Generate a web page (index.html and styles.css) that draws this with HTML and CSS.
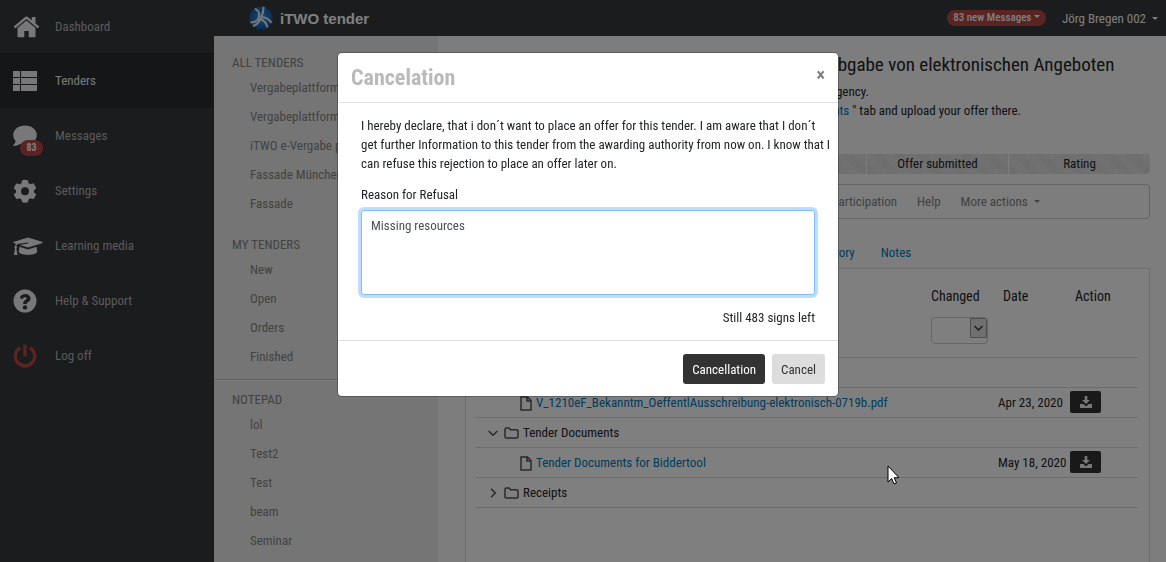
FILE: index.html
```html
<!DOCTYPE html>
<html lang="en">
<head>
  <meta charset="UTF-8" />
  <meta name="viewport" content="width=device-width, initial-scale=1" />
  <title>iTWO tender</title>
  <link rel="stylesheet" href="styles.css">
</head>
<body>
  <div class="app">
    <nav class="sidebar">
      <a href="#" class="side-item">
        <svg class="side-icon" viewBox="0 0 27 24"><path d="M13.5 5.5 4.500 13v8.500c0 .5.300.8.800.8h6v-6.300h4.400v6.300h6c.5 0 .8-.3.800-.8V13z"/><path d="M26.300 11.600 22.500 8.400V2h-3.700v3.300l-3.700-3.100c-1-.8-2.200-.8-3.200 0L.700 11.600l1.500 1.800L13.500 4l11.300 9.400z"/></svg>
        <span>Dashboard</span>
      </a>
      <a href="#" class="side-item active">
        <svg class="side-icon" viewBox="0 0 27 24"><path d="M0 2h7v6H0zM8 2h16v6H8zM0 9h7v6H0zM8 9h16v6H8zM0 16h7v6H0zM8 16h16v6H8z"/></svg>
        <span>Tenders</span>
      </a>
      <a href="#" class="side-item">
        <svg class="side-icon" viewBox="0 0 27 24"><path d="M12 1.500C5.400 1.500.2 5.700.2 11c0 2.300 1 4.300 2.500 6C2.300 19 .5 21 .3 21.300c-.3.3 0 .8.300.8 3 0 5.300-1.300 6.700-2.300 1.400.5 3 .8 4.700.8 6.500 0 11.800-4.200 11.800-9.600S18.500 1.500 12 1.500z"/></svg>
        <span class="count">83</span>
        <span>Messages</span>
      </a>
      <a href="#" class="side-item">
        <svg class="side-icon" viewBox="0 0 27 24"><path fill-rule="evenodd" d="M9 1.300c1.800-.7 4.200-.7 6 0l.500 2.900 2 1.100 2.700-1c1.400 1.400 2.400 3.100 3 5L21 11.200v2.200l2.200 1.900c-.6 1.900-1.600 3.600-3 5l-2.700-1-2 1.100-.5 2.900c-1.900.5-4.100.5-6 0l-.5-2.900-2-1.100-2.700 1c-1.400-1.400-2.400-3.100-3-5L3 13.400v-2.200L.8 9.300c.6-1.900 1.600-3.600 3-5l2.700 1 2-1.100zM12 8.300a4 4 0 1 0 0 8 4 4 0 0 0 0-8z"/></svg>
        <span>Settings</span>
      </a>
      <a href="#" class="side-item">
        <svg class="side-icon wide" viewBox="0 0 30 24"><path d="m15 3.500 14 4.200c.8.300.8 1.300 0 1.600l-14 4.200-8.200-2.400 8.200-1.600c.7-.2.500-1.200-.2-1.100L4.600 10.100c-.8.500-1.200 1.200-1.300 2.100.9.500.9 1.700.1 2.300l1 5.700c.1.400-.1.700-.5.700H1.500c-.4 0-.6-.3-.5-.7l1-5.700c-.8-.6-.8-1.800.1-2.300.1-1 .4-1.800.9-2.500L1 9.300c-.8-.3-.8-1.300 0-1.600zM15 15.400l8.500-2.600.7 4.800c0 2-4.200 3.300-9.200 3.300s-9.200-1.300-9.200-3.300l.7-4.800z"/></svg>
        <span>Learning media</span>
      </a>
      <a href="#" class="side-item">
        <svg class="side-icon" viewBox="0 0 27 24"><path fill-rule="evenodd" d="M12 .5a11.500 11.500 0 1 0 0 23 11.500 11.500 0 0 0 0-23zM6.700 8.600C8 6.300 9.600 5 12.300 5c2.800 0 5.200 1.900 5.200 4.500 0 3.400-3.700 3.500-3.700 4.900v.5h-3.600v-.7c0-2.800 3.500-3.200 3.500-4.600 0-.7-.8-1.300-1.600-1.300-1.200 0-1.800.6-2.900 2zM12 16.200a2.200 2.200 0 1 1 0 4.400 2.200 2.200 0 0 1 0-4.400z"/></svg>
        <span>Help &amp; Support</span>
      </a>
      <a href="#" class="side-item">
        <svg class="side-icon" viewBox="0 0 27 24"><path class="power" d="M7.300 3.800a9.700 9.700 0 1 0 9.400 0M12 .5v12"/></svg>
        <span>Log off</span>
      </a>
    </nav>

    <div class="page">
      <header class="topbar">
        <svg class="logo" viewBox="0 0 24 24">
          <defs>
            <radialGradient id="globe" cx="50%" cy="45%" r="60%">
              <stop offset="0" stop-color="#2f95e6"/>
              <stop offset="1" stop-color="#134f9c"/>
            </radialGradient>
          </defs>
          <circle cx="12" cy="12" r="11.500" fill="url(#globe)"/>
          <path class="swirl" d="M6 2.500c4 2.500 5 6 3.500 9.500-1.200 3-4 4.500-8 4.500M14.500.800c.3 5-1 8-2.500 11.200-1.500 3.500-4 6.500-8 8M13 11c4 .5 7.500 2.500 9.500 6M11.500 13c3.500 1.500 6 4.500 7 8.500"/>
        </svg>
        <span class="brand">iTWO tender</span>
        <button type="button" class="messages">83 new Messages <i class="caret"></i></button>
        <button type="button" class="user">Jörg Bregen 002 <i class="caret"></i></button>
      </header>

      <div class="content">
        <aside class="filters">
          <h2>All tenders</h2>
          <ul>
            <li><a href="#">Vergabeplattform</a></li>
            <li><a href="#">Vergabeplattform</a></li>
            <li><a href="#">iTWO e-Vergabe public</a></li>
            <li><a href="#">Fassade München</a></li>
            <li><a href="#">Fassade</a></li>
          </ul>
          <h2>My tenders</h2>
          <ul>
            <li><a href="#">New</a></li>
            <li><a href="#">Open</a></li>
            <li><a href="#">Orders</a></li>
            <li><a href="#">Finished</a></li>
          </ul>
          <hr>
          <h2>Notepad</h2>
          <ul>
            <li><a href="#">lol</a></li>
            <li><a href="#">Test2</a></li>
            <li><a href="#">Test</a></li>
            <li><a href="#">beam</a></li>
            <li><a href="#">Seminar</a></li>
          </ul>
        </aside>

        <main class="tender">
          <h1>Ausschreibung einer Software, als Plattform zur Abgabe von elektronischen Angeboten</h1>
          <p>You have been invited to submit your offer for a tender by the awarding agency.</p>
          <p>Please fill in all of the required documents. Then switch to the " <a href="#">Documents</a> " tab and upload your offer there.</p>

          <ol class="steps">
            <li></li>
            <li></li>
            <li></li>
            <li>Offer submitted</li>
            <li>Rating</li>
          </ol>

          <div class="actions">
            <a href="#">participation</a>
            <a href="#">Help</a>
            <a href="#">More actions <i class="caret"></i></a>
          </div>

          <div class="tabs">
            <a href="#">History</a>
            <a href="#">Notes</a>
          </div>

          <section class="panel">
            <table>
              <thead>
                <tr>
                  <th class="name"></th>
                  <th class="changed"><label for="changed">Changed</label></th>
                  <th class="date">Date</th>
                  <th class="action">Action</th>
                </tr>
                <tr class="filter-row">
                  <td></td>
                  <td><select id="changed"><option></option></select></td>
                  <td></td>
                  <td></td>
                </tr>
              </thead>
              <tbody>
                <tr><td colspan="4"></td></tr>
                <tr>
                  <td colspan="2" class="file"><svg class="file-icon" viewBox="0 0 12 15"><path d="M1 1h6.500L11 4.500V14H1zM7 1v4h4"/></svg><a href="#">V_1210eF_Bekanntm_OeffentlAusschreibung-elektronisch-0719b.pdf</a></td>
                  <td>Apr 23, 2020</td>
                  <td><button type="button" class="download" aria-label="Download"><svg viewBox="0 0 12 12"><path d="M4.700 0h2.600v4h2.600L6 8 2.100 4h2.600zM0 8h3.300L6 10.500 8.700 8H12v4H0z"/></svg></button></td>
                </tr>
                <tr>
                  <td colspan="4" class="folder"><svg class="chevron" viewBox="0 0 10 10"><path d="m.7 3 4.300 4.300L9.300 3"/></svg><svg class="folder-icon" viewBox="0 0 15 12"><path d="M1 2.500C1 1.500 1.500 1 2.300 1H5l1.500 1.700h6c1 0 1.500.5 1.500 1.300v5.700c0 .8-.5 1.300-1.300 1.300H2.300C1.500 11 1 10.500 1 9.700z"/></svg>Tender Documents</td>
                </tr>
                <tr>
                  <td colspan="2" class="file"><svg class="file-icon" viewBox="0 0 12 15"><path d="M1 1h6.500L11 4.500V14H1zM7 1v4h4"/></svg><a href="#">Tender Documents for Biddertool</a></td>
                  <td>May 18, 2020</td>
                  <td><button type="button" class="download" aria-label="Download"><svg viewBox="0 0 12 12"><path d="M4.700 0h2.600v4h2.600L6 8 2.100 4h2.600zM0 8h3.300L6 10.500 8.700 8H12v4H0z"/></svg></button></td>
                </tr>
                <tr>
                  <td colspan="4" class="folder"><svg class="chevron" viewBox="0 0 10 10"><path d="M3 .7 7.300 5 3 9.300"/></svg><svg class="folder-icon" viewBox="0 0 15 12"><path d="M1 2.500C1 1.500 1.500 1 2.300 1H5l1.500 1.700h6c1 0 1.500.5 1.500 1.300v5.700c0 .8-.5 1.300-1.300 1.300H2.300C1.500 11 1 10.500 1 9.700z"/></svg>Receipts</td>
                </tr>
              </tbody>
            </table>
          </section>
        </main>
      </div>
    </div>
  </div>

  <div class="backdrop">
    <div class="modal" role="dialog" aria-modal="true" aria-labelledby="modalTitle">
      <div class="modal-header">
        <h3 id="modalTitle">Cancelation</h3>
        <button type="button" class="close" aria-label="Close">×</button>
      </div>
      <div class="modal-body">
        <p>I hereby declare, that i don´t want to place an offer for this tender. I am aware that I don´t<br>get further Information to this tender from the awarding authority from now on. I know that I<br>can refuse this rejection to place an offer later on.</p>
        <label for="reason">Reason for Refusal</label>
        <textarea id="reason">Missing resources</textarea>
        <div class="remaining">Still 483 signs left</div>
      </div>
      <div class="modal-footer">
        <button type="button" class="btn dark">Cancellation</button>
        <button type="button" class="btn">Cancel</button>
      </div>
    </div>
  </div>

  <svg class="cursor" viewBox="0 0 12 20"><path d="M1 1v16l3.700-3.500L7 19l2.500-1-2.300-5.300H12z"/></svg>
</body>
</html>
```
FILE: styles.css
```css
* {
  box-sizing: border-box;
}

body {
  margin: 0;
  font-family: "Roboto Condensed", Roboto, sans-serif;
  font-size: 13px;
  line-height: 19px;
  color: #212529;
  background: #fafafa;
}

a {
  color: #0079b8;
  text-decoration: none;
}

button,
select,
textarea {
  font: inherit;
}

h1,
h2,
h3,
p,
ul,
ol {
  margin: 0;
  padding: 0;
  font-weight: 400;
}

ul,
ol {
  list-style: none;
}

.app {
  display: flex;
  height: 100vh;
  overflow: hidden;
}

.caret {
  display: inline-block;
  margin-left: 3px;
  border: 3px solid transparent;
  border-top-color: currentColor;
  border-bottom: 0;
  vertical-align: 3px;
}

/* main navigation */
.sidebar {
  flex: 0 0 214px;
  background: #35383b;
}

.side-item {
  position: relative;
  display: flex;
  align-items: center;
  height: 55px;
  padding-left: 13px;
  color: #b4b4b4;
}

.side-item:first-child {
  height: 53px;
}

.side-item.active {
  background: #292c2e;
  color: #f0f0f0;
}

.side-icon {
  width: 27px;
  height: 24px;
  margin-right: 15px;
  fill: #f0f0f0;
}

.side-icon.wide {
  width: 30px;
  margin-right: 12px;
}

.side-icon .power {
  fill: none;
  stroke: #b94646;
  stroke-width: 3.500;
}

.count {
  position: absolute;
  left: 20px;
  top: 32px;
  width: 23px;
  border-radius: 8px;
  background: #b94646;
  color: #fff;
  font-size: 10px;
  font-weight: 700;
  line-height: 16px;
  text-align: center;
}

.page {
  flex: 1;
  display: flex;
  flex-direction: column;
  min-width: 0;
}

.topbar {
  display: flex;
  align-items: center;
  flex: 0 0 36px;
  padding: 0 8px 0 35px;
  background: #35383b;
}

.logo {
  width: 24px;
  height: 24px;
}

.swirl {
  fill: none;
  stroke: #e8eef4;
  stroke-width: 2;
}

.brand {
  flex: 1;
  margin-left: 7px;
  color: #fff;
  font-family: "Liberation Sans", Arial, sans-serif;
  font-size: 15px;
  font-weight: 700;
}

.messages {
  padding: 0 6px;
  border: 0;
  border-radius: 8px;
  background: #b94646;
  color: #fff;
  font-size: 11px;
  font-weight: 500;
  line-height: 16px;
}

.messages .caret {
  margin-left: 0;
}

.user {
  margin-left: 16px;
  padding: 0;
  border: 0;
  background: none;
  color: #fff;
}

.content {
  flex: 1;
  display: flex;
  min-height: 0;
}

/* tender filters */
.filters {
  flex: 0 0 224px;
  padding-top: 17px;
  background: #ebebeb;
}

.filters h2 {
  padding-left: 18px;
  color: #858585;
  font-size: 13px;
  line-height: 20px;
  text-transform: uppercase;
}

.filters ul + h2 {
  margin-top: 17px;
}

.filters li {
  padding-left: 36px;
  line-height: 29px;
  white-space: nowrap;
}

.filters li a {
  color: #858585;
}

.filters hr {
  margin: 8px 0 9px;
  border: 0;
  border-top: 1px solid #c4c4c4;
  border-bottom: 1px solid #fff;
}

/* tender details */
.tender {
  flex: 1;
  display: flex;
  flex-direction: column;
  min-width: 0;
  padding: 16px 16px 0 27px;
  white-space: nowrap;
}

.tender h1 {
  margin-bottom: 5px;
  font-size: 19px;
  line-height: 25px;
}

.steps {
  display: flex;
  gap: 1px;
  margin: 34px 0 10px;
  overflow: hidden;
  border-radius: 4px;
}

.steps li {
  flex: 0 0 141px;
  min-height: 20px;
  background: repeating-linear-gradient(45deg, #dcdcdc 0 8px, #e2e2e2 8px 16px);
  line-height: 20px;
  text-align: center;
}

.steps li:first-child {
  flex: 1;
}

.actions {
  display: flex;
  gap: 20px;
  padding: 7px 0 7px 366px;
  border: 1px solid #c8c8c8;
  border-radius: 4px;
  background: #f8faf9;
}

.actions a {
  color: #858585;
}

.tabs {
  display: flex;
  gap: 26px;
  padding: 24px 0 6px 353px;
}

.panel {
  flex: 1;
  padding: 14px 11px 14px 10px;
  border: 1px solid #dadada;
  border-bottom: 0;
  background: #fff;
}

table {
  width: 100%;
  border-collapse: collapse;
  table-layout: fixed;
}

th {
  padding: 4px 0;
  font-size: 14px;
  font-weight: 400;
  text-align: left;
}

td {
  height: 30px;
  padding: 0;
}

.changed {
  width: 67px;
}

.date {
  width: 72px;
  padding-left: 5px;
}

.action {
  width: 68px;
  padding-left: 5px;
}

tbody tr {
  border-top: 1px solid #dadada;
}

tbody {
  border-bottom: 1px solid #dadada;
}

.filter-row td {
  height: 47px;
  padding-top: 7px;
  vertical-align: top;
}

select {
  display: block;
  width: 57px;
  height: 27px;
  border: 1px solid #ccc;
  border-radius: 4px;
  appearance: none;
  background: #fff url("data:image/svg+xml,%3Csvg xmlns='http://www.w3.org/2000/svg' width='17' height='20'%3E%3Cpath d='M.5.5h16v19H.5z' fill='%23e1e1e1' stroke='%23999'/%3E%3Cpath d='m4.500 8 4 4 4-4' fill='none' stroke='%23333' stroke-width='1.300'/%3E%3C/svg%3E") right top no-repeat;
}

td svg {
  margin-right: 4px;
  fill: none;
  stroke: #555;
  stroke-width: 1.500;
  vertical-align: middle;
}

.file {
  padding-left: 44px;
}

.file-icon {
  width: 12px;
  height: 15px;
}

.folder {
  padding-left: 12px;
}

.chevron {
  width: 10px;
  height: 10px;
}

td .chevron {
  margin-right: 6px;
}

.folder-icon {
  width: 15px;
  height: 12px;
}

.download {
  display: block;
  width: 31px;
  height: 22px;
  padding: 0;
  border: 0;
  border-radius: 2px;
  background: #333;
}

.download svg {
  display: block;
  width: 12px;
  height: 12px;
  margin: 0 auto;
  fill: #eee;
  stroke: none;
}

/* cancelation dialog */
.backdrop {
  position: fixed;
  inset: 0;
  padding: 53px 16px 0 26px;
  background: rgba(0, 0, 0, 0.5);
}

.modal {
  max-width: 500px;
  margin: 0 auto;
  border-radius: 4px;
  background: #fff;
  box-shadow: 0 0 0 1px rgba(0, 0, 0, 0.25);
}

.modal-header {
  display: flex;
  justify-content: space-between;
  align-items: flex-start;
  padding: 12px 13px;
  border-bottom: 1px solid #dee2e6;
}

.modal-header h3 {
  color: #bababa;
  font-size: 22px;
  font-weight: 700;
  line-height: 25px;
}

.close {
  padding: 0;
  border: 0;
  background: none;
  color: #7f7f7f;
  font-size: 18px;
  font-weight: 700;
  line-height: 19px;
}

.modal-body {
  padding: 13px 0 13px 23px;
}

.modal-body p {
  margin-bottom: 12px;
}

.modal-body label {
  display: block;
  margin-bottom: 6px;
}

textarea {
  display: block;
  width: calc(100% - 23px);
  height: 85px;
  padding: 5px 9px;
  border: 1px solid #80bdff;
  border-radius: 3px;
  outline: 0;
  color: #495057;
  box-shadow: 0 0 0 3px #bfdeff;
  resize: none;
}

.remaining {
  margin: 13px 23px 0 0;
  text-align: right;
}

.modal-footer {
  display: flex;
  justify-content: flex-end;
  gap: 7px;
  padding: 13px 13px 12px;
  border-top: 1px solid #dee2e6;
}

.btn {
  height: 30px;
  padding: 0 9px;
  border: 0;
  border-radius: 3px;
  background: #ddd;
  color: #333;
}

.btn.dark {
  background: #333;
  color: #fff;
}

.cursor {
  position: fixed;
  left: 887px;
  top: 465px;
  width: 12px;
  height: 20px;
  fill: #fff;
  stroke: #000;
}
```
